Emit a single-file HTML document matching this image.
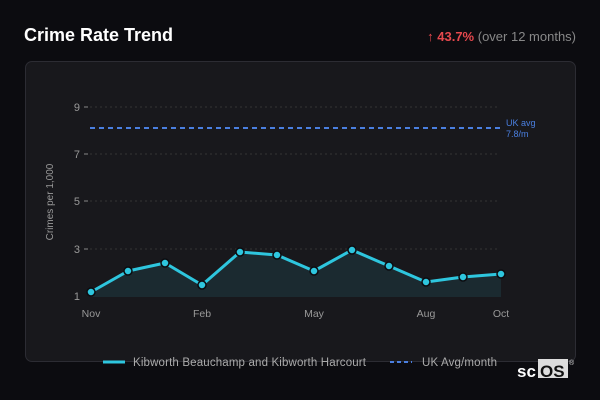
<!DOCTYPE html>
<html><head><style>
body{margin:0;width:600px;height:400px;background:#0c0c10;font-family:"Liberation Sans",sans-serif;overflow:hidden;position:relative}
.t{position:absolute;left:24px;top:25px;color:#fff;font-size:18px;font-weight:bold}
.r{position:absolute;right:24px;top:29px;font-size:13px;color:#888}
.r b{color:#e5484d}
.card{position:absolute;left:25px;top:61px;width:549px;height:299px;background:#18181c;border:1px solid #2c2c33;border-radius:7px}
</style></head><body>
<div class="t">Crime Rate Trend</div>
<div class="r"><b>↑ 43.7%</b> (over 12 months)</div>
<div class="card"></div>
<svg width="600" height="400" style="position:absolute;left:0;top:0" font-family="Liberation Sans, sans-serif">
<g stroke="#333" stroke-dasharray="2 3" stroke-width="1">
<line x1="90" y1="107" x2="500" y2="107"/><line x1="90" y1="154" x2="500" y2="154"/><line x1="90" y1="201" x2="500" y2="201"/><line x1="90" y1="249" x2="500" y2="249"/></g>
<g fill="#999" font-size="11" text-anchor="end"><text x="80" y="111">9</text><text x="80" y="158">7</text><text x="80" y="205">5</text><text x="80" y="253">3</text><text x="80" y="300">1</text></g>
<g stroke="#888"><line x1="84" y1="107" x2="88" y2="107"/><line x1="84" y1="154" x2="88" y2="154"/><line x1="84" y1="201" x2="88" y2="201"/><line x1="84" y1="249" x2="88" y2="249"/></g>
<text x="53" y="202" fill="#999" font-size="10" text-anchor="middle" transform="rotate(-90 53 202)">Crimes per 1,000</text>
<line x1="90" y1="128" x2="500" y2="128" stroke="#4a7fe0" stroke-width="2" stroke-dasharray="5 4"/>
<text x="506" y="126" fill="#4a7fe0" font-size="9">UK avg</text><text x="506" y="137" fill="#4a7fe0" font-size="9">7.8/m</text>
<polygon fill="#1b2a30" points="91,297 91,292 128,271 165,263 202,285 240,252 277,255 314,271 352,250 389,266 426,282 463,277 501,274 501,297"/>
<polyline fill="none" stroke="#2ec6de" stroke-width="3" stroke-linejoin="round" points="91,292 128,271 165,263 202,285 240,252 277,255 314,271 352,250 389,266 426,282 463,277 501,274"/>
<g fill="#2ec6de" stroke="#0c0c10" stroke-width="1.5">
<circle cx="91" cy="292" r="4"/><circle cx="128" cy="271" r="4"/><circle cx="165" cy="263" r="4"/><circle cx="202" cy="285" r="4"/><circle cx="240" cy="252" r="4"/><circle cx="277" cy="255" r="4"/><circle cx="314" cy="271" r="4"/><circle cx="352" cy="250" r="4"/><circle cx="389" cy="266" r="4"/><circle cx="426" cy="282" r="4"/><circle cx="463" cy="277" r="4"/><circle cx="501" cy="274" r="4"/></g>
<g fill="#999" font-size="10.5" text-anchor="middle"><text x="91" y="317">Nov</text><text x="202" y="317">Feb</text><text x="314" y="317">May</text><text x="426" y="317">Aug</text><text x="501" y="317">Oct</text></g>
<line x1="103" y1="362" x2="125" y2="362" stroke="#2ec6de" stroke-width="3"/>
<text x="133" y="366" fill="#aaa" font-size="11.5" textLength="233">Kibworth Beauchamp and Kibworth Harcourt</text>
<line x1="390" y1="362" x2="412" y2="362" stroke="#4a7fe0" stroke-width="2" stroke-dasharray="4 3"/>
<text x="422" y="366" fill="#aaa" font-size="11.5" textLength="75">UK Avg/month</text>
<text x="517" y="377" fill="#fff" font-size="17" font-weight="bold">sc</text>
<rect x="538" y="359" width="30" height="19" fill="#ddd"/>
<text x="540" y="377" fill="#111" font-size="17" font-weight="bold">OS</text>
<text x="569" y="365" fill="#ddd" font-size="7">®</text>
</svg>
</body></html>
